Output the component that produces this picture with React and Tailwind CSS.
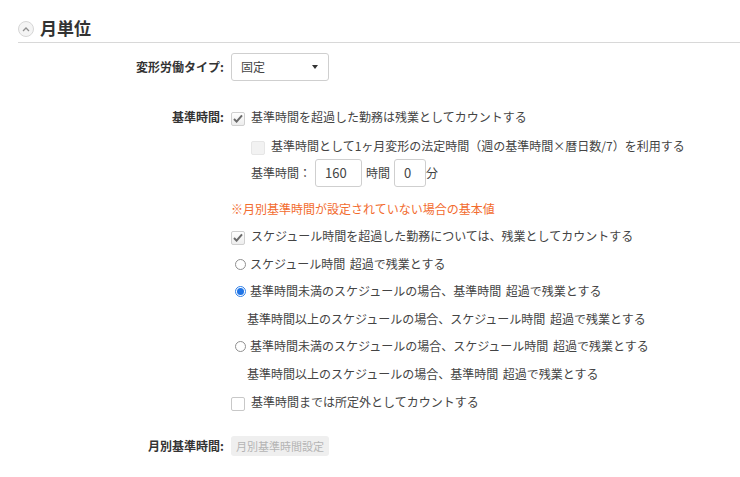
const font = { fontFamily: '"Noto Sans CJK JP", "Liberation Sans", sans-serif' };

function Check({ checked, disabled }) {
  return (
    <span className={`mt-[3px] flex h-[14px] w-[14px] shrink-0 items-center justify-center rounded-[2px] border ${disabled ? "border-[#e6e6e6] bg-[#f2f2f2]" : checked ? "border-[#cfcfcf] bg-linear-to-b from-white to-[#ededed]" : "border-[#c8c8c8] bg-white"}`}>
      {checked && (
        <svg width="10" height="9" viewBox="0 0 10 9">
          <path d="M1 5 L3.6 7.6 L9 1.4" fill="none" stroke="#6a6a6a" strokeWidth="2" />
        </svg>
      )}
    </span>
  );
}

function Radio({ checked }) {
  return (
    <span className={`flex h-[11px] w-[11px] shrink-0 items-center justify-center rounded-full border ${checked ? "border-[#2f7fe8] bg-white" : "border-[#909090] bg-white"}`}>
      {checked && <span className="h-[7px] w-[7px] rounded-full bg-[#1f74e6]" />}
    </span>
  );
}

function Row({ className = "", label, children }) {
  return (
    <div className={`flex items-center ${className}`}>
      <div className="w-[224px] shrink-0 text-right text-[12px] font-bold text-[#333]">{label}</div>
      <div className="ml-[7px] flex min-w-0 items-center">{children}</div>
    </div>
  );
}

export default function App() {
  return (
    <div className="h-[477px] w-[740px] overflow-hidden bg-white text-[12px] leading-[18px] text-[#444] [word-spacing:2px]" style={font}>
      <div className="ml-[18px] mt-[17px] flex h-[26px] items-start gap-[6px] border-b border-[#d8d8d8]">
        <span className="mt-[4px] flex h-[16px] w-[16px] items-center justify-center rounded-full border border-[#d6d6d6] bg-[#f4f4f4]">
          <svg width="8" height="5" viewBox="0 0 8 5">
            <path d="M1 4 L4 1 L7 4" fill="none" stroke="#8f8f8f" strokeWidth="1.3" />
          </svg>
        </span>
        <h2 className="-mt-[1px] text-[17px] font-bold leading-[24px] text-[#333]">月単位</h2>
      </div>

      <Row className="mt-[10px] h-[28px]" label="変形労働タイプ:">
        <div className="flex h-[28px] w-[98px] items-center justify-between rounded-[3px] border border-[#cfcfcf] bg-white pl-[9px] pr-[10px] text-[#444]">
          <span>固定</span>
          <span className="h-0 w-0 border-x-[3.5px] border-t-[4px] border-x-transparent border-t-[#333]" />
        </div>
      </Row>

      <Row className="mt-[27px] h-[18px]" label="基準時間:">
        <Check checked />
        <span className="ml-[6px]">基準時間を超過した勤務は残業としてカウントする</span>
      </Row>

      <div className="ml-[231px]">
        <div className="mt-[11px] flex h-[18px] items-center pl-[20px]">
          <Check disabled />
          <span className="ml-[6px]">基準時間として1ヶ月変形の法定時間（週の基準時間×暦日数/7）を利用する</span>
        </div>
        <div className="mt-[4px] flex h-[28px] items-center pl-[20px]">
          <span className="w-[64px]">基準時間：</span>
          <span className="flex h-[28px] w-[47px] items-center rounded-[3px] border border-[#cfcfcf] pl-[9px] text-[13px]">160</span>
          <span className="ml-[4px] w-[28px]">時間</span>
          <span className="flex h-[28px] w-[32px] items-center rounded-[3px] border border-[#cfcfcf] pl-[9px] text-[13px]">0</span>
          <span>分</span>
        </div>
        <div className="mt-[13px] h-[18px] text-[#f26b2e]">※月別基準時間が設定されていない場合の基本値</div>
        <div className="mt-[9px] flex h-[18px] items-center">
          <Check checked />
          <span className="ml-[6px]">スケジュール時間を超過した勤務については、残業としてカウントする</span>
        </div>
        <div className="mt-[10px] flex h-[18px] items-center pl-[4px]">
          <Radio />
          <span className="ml-[4px]">スケジュール時間 超過で残業とする</span>
        </div>
        <div className="mt-[9px] flex h-[18px] items-center pl-[4px]">
          <Radio checked />
          <span className="ml-[4px]">基準時間未満のスケジュールの場合、基準時間 超過で残業とする</span>
        </div>
        <div className="mt-[10px] h-[18px] pl-[16px]">基準時間以上のスケジュールの場合、スケジュール時間 超過で残業とする</div>
        <div className="mt-[9px] flex h-[18px] items-center pl-[4px]">
          <Radio />
          <span className="ml-[4px]">基準時間未満のスケジュールの場合、スケジュール時間 超過で残業とする</span>
        </div>
        <div className="mt-[10px] h-[18px] pl-[16px]">基準時間以上のスケジュールの場合、基準時間 超過で残業とする</div>
        <div className="mt-[10px] flex h-[18px] items-center">
          <Check />
          <span className="ml-[6px]">基準時間までは所定外としてカウントする</span>
        </div>
      </div>

      <Row className="mt-[25px] h-[20px]" label="月別基準時間:">
        <span className="flex h-[20px] items-center rounded-[3px] bg-[#efefef] px-[5px] text-[11px] text-[#b4b4b4]">月別基準時間設定</span>
      </Row>
    </div>
  );
}
